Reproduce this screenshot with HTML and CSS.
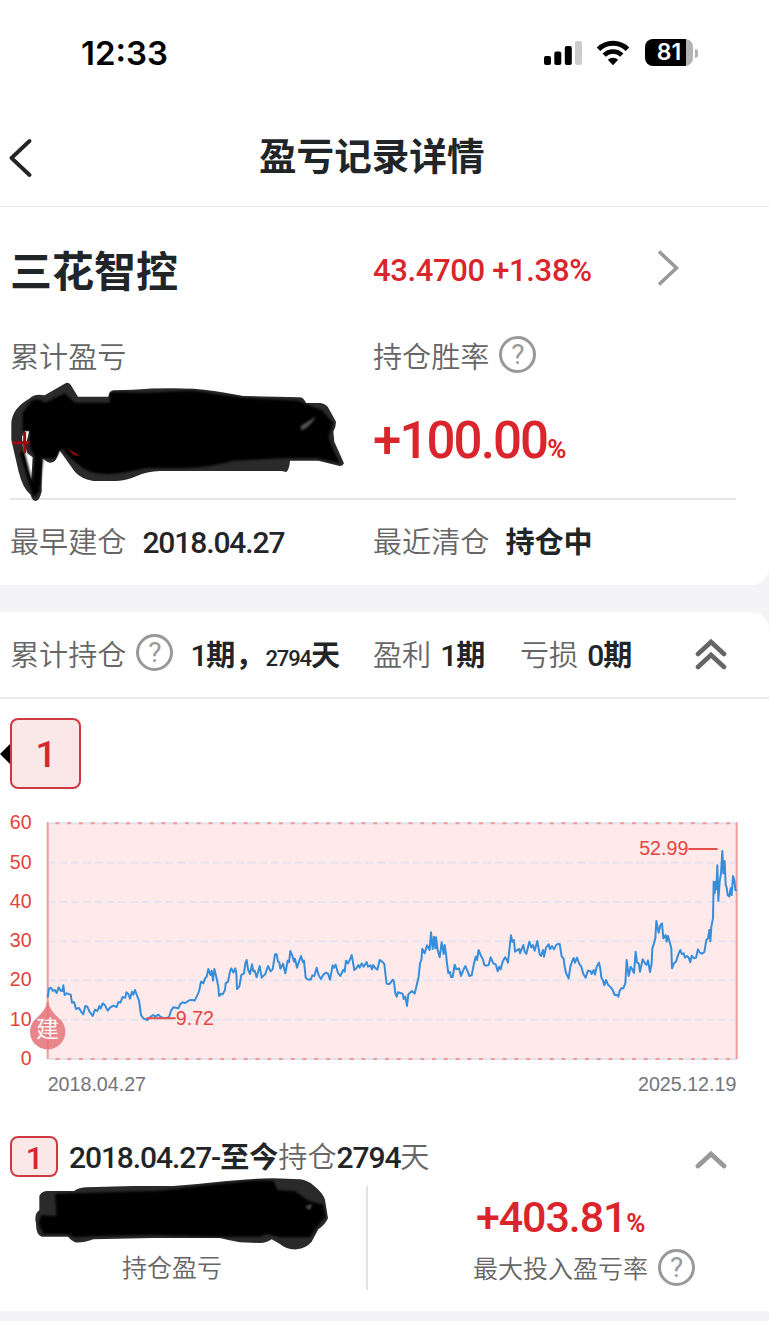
FILE: index.html
```html
<!DOCTYPE html>
<html lang="zh-CN">
    <head>
        <meta charset="utf-8">
        <meta name="viewport" content="width=device-width, initial-scale=1.0">
        <title>盈亏记录详情</title>
        <link rel="stylesheet" href="styles.css">
    </head>
    <body>
        <div class="statusbar">
            <span class="time">12:33</span>
            <svg class="signal" width="38" height="26" viewBox="0 0 38 26">
                <rect x="0" y="16" width="7" height="9" rx="2"/>
                <rect x="10.3" y="11.5" width="7" height="13.5" rx="2"/>
                <rect x="20.8" y="6" width="7" height="19" rx="2"/>
                <rect x="31" y="1" width="7" height="24" rx="2" fill="#ccc"/>
            </svg>
            <svg class="wifi" width="34" height="26" viewBox="0 0 34 26">
                <path d="M2.5 9.2A20.5 20.5 0 0 1 31.5 9.2" fill="none" stroke="#000" stroke-width="5"/>
                <path d="M8.2 15.2A12.4 12.4 0 0 1 25.8 15.2" fill="none" stroke="#000" stroke-width="4.6"/>
                <path d="M17 25.2L11.8 19.8A7.6 7.6 0 0 1 22.2 19.8Z"/>
            </svg>
            <div class="battery"><span>81</span></div>
            <div class="nub"></div>
        </div>
        <div class="navbar">
            <svg class="back" width="24" height="42" viewBox="0 0 24 42">
                <path d="M21.5 4L3.5 21L21.5 38" fill="none" stroke="#222528" stroke-width="3.8" stroke-linecap="round" stroke-linejoin="round"/>
            </svg>
            <h1>盈亏记录详情</h1>
        </div>

        <div class="card summary">
            <div class="row stock">
                <div class="left name">三花智控</div>
                <div class="num price">43.4700 +1.38%</div>
                <svg class="go" width="24" height="40" viewBox="0 0 24 40">
                    <path d="M2 3.5L19.5 20L2 36.5" fill="none" stroke="#999" stroke-width="3.6"/>
                </svg>
            </div>
            <div class="row labels">
                <div class="left">累计盈亏</div>
                <div>持仓胜率</div>
                <div class="help">?</div>
            </div>
            <div class="row values">
                <div class="left">
                    <!-- hidden amount -->
                    <svg class="scribble" width="363" height="117" viewBox="30 483 1089 351">
                        <path fill="#2a2a2a" d="M134 526L198 489Q208 486 213 496L234 530H325Q328 512 342 511L400 509Q480 503 580 506Q640 510 730 528L900 532Q912 534 918 549H960Q975 550 984 562L1008 605Q1008 620 1000 635L1003 665L1032 730Q1028 740 1016 737L955 722H870Q868 750 858 756L845 753H480Q440 755 410 768Q380 782 350 783H280Q245 778 225 756L178 690Q170 730 150 728Q134 724 126 710L125 815Q118 843 106 843Q96 842 92 824Q68 805 56 755L34 660V610Q36 565 90 535Q102 520 134 526ZM76 632L66 650Q72 740 94 780L98 712L82 700L76 680L88 632Z"/>
                        <path class="core" d="M92 545Q110 530 135 548L195 520L225 548H330V516L440 518L580 512L730 534L895 542L925 556L965 570L1000 610L985 650L1000 690L1020 730L950 714H860L700 722Q640 740 560 744H440L380 756Q320 768 270 755Q225 735 186 684L165 715H130L118 815L100 832L60 700L72 690L98 790L104 710L90 680V632H68V580Z"/>
                        <path d="M38 668H88M74 636V700" stroke="#a00812" stroke-width="9"/>
                        <path d="M205 690Q220 692 240 708L222 706Z" fill="#8a0610"/>
                        <path class="core" d="M902 618Q930 600 948 590Q930 620 904 632Z" fill="#555"/>
                    </svg>
                </div>
                <div class="num big">+100.00<small>%</small></div>
            </div>
            <div class="line"></div>
            <div class="row dates">
                <div class="left">最早建仓<span class="num dark date">2018.04.27</span></div>
                <div>最近清仓<b class="state">持仓中</b></div>
            </div>
        </div>

        <div class="card periods">
            <div class="row total">
                <div class="left hold">累计持仓<div class="help">?</div><b class="first"><i>1</i>期，</b><b><i class="days">2794</i>天</b></div>
                <div class="win">盈利<b><i>1</i>期</b></div>
                <div class="lose">亏损<b><i>0</i>期</b></div>
                <svg class="fold" width="32" height="34" viewBox="0 0 32 34">
                    <path d="M3 16L16 4L29 16M3 29L16 17L29 29" fill="none" stroke="#666" stroke-width="4.6" stroke-linecap="round" stroke-linejoin="miter"/>
                </svg>
            </div>
            <div class="tabs">
                <div class="arrow"></div>
                <div class="tab num">1</div>
            </div>
            <!-- 3 units = 1px -->
            <svg class="chart" width="769" height="300" viewBox="0 0 2307 900">
                <rect x="143" y="70" width="2067" height="707" fill="#feeaea"/>
                <path class="grid" d="M143 188H2210M143 306H2210M143 424H2210M143 541H2210M143 659H2210"/>
                <path class="edge" d="M143 70H2210M143 777H2210"/>
                <path class="dots" d="M143 70H2210M143 777H2210"/>
                <path class="side" d="M143 67V777M2210 67V777"/>
                <polyline class="price-line" points="143,593 147,566 153,563 158,572 165,570 170,579 176,562 182,572 187,573 190,556 194,585 200,580 212,584 216,608 222,606 228,627 237,624 244,636 250,643 256,618 262,620 268,634 278,648 285,629 292,633 298,618 302,626 308,610 315,616 323,632 331,622 340,617 350,621 355,606 361,608 368,591 376,593 379,577 385,582 390,596 396,575 400,584 405,570 411,587 417,602 423,645 430,655 442,660 452,650 460,645 466,650 475,644 482,651 495,655 507,652 513,632 520,622 535,625 541,612 548,607 556,609 563,604 570,600 578,600 584,602 590,590 597,575 603,545 610,550 615,535 620,530 625,507 631,525 635,512 639,542 643,507 650,535 655,560 657,588 662,582 668,583 675,570 677,550 684,545 690,515 694,505 700,518 706,505 709,520 711,567 718,560 724,525 732,520 736,490 740,480 744,508 750,522
                    756,493 760,514 764,512 770,532 779,498 785,533 796,522 804,498 812,514 818,508 825,463 830,463 834,485 838,487 841,506 849,491 856,520 863,482 867,487 871,453 878,470 882,485 885,476 891,503 897,485 903,468 909,487 912,482 917,533 922,538 932,539 937,526 943,528 950,503 956,526 963,537 970,524 978,518 984,521 990,539 998,496 1002,503 1007,494 1014,519 1021,528 1030,509 1034,515 1038,482 1044,490 1050,478 1055,465 1063,510 1069,505 1075,495 1079,503 1085,490 1091,500 1100,486 1104,500 1112,496 1116,508 1120,495 1125,503 1132,509 1139,480 1149,487 1153,492 1156,520 1160,551 1168,552 1179,539 1182,546 1186,580 1190,590 1194,577 1208,581 1211,597 1216,590 1221,618 1225,583 1236,573 1244,581 1249,560 1256,530 1260,490 1264,480 1267,446 1274,460 1281,436 1289,450 1293,397 1298,447 1302,410 1306,445 1308,412 1313,450 1319,472 1325,427 1331,462 1334,435 1338,462 1341,490 1345,519 1350,516 1353,531 1358,531 1364,494 1369,508 1377,505 1383,528 1391,508 1396,498 1403,514 1408,528 1415,526 1421,495 1427,470 1431,480 1436,450 1443,468 1448,476 1453,495 1460,497 1466,495 1472,472 1480,490 1487,493 1493,514 1498,500 1502,508
                    1508,485 1515,472 1520,478 1524,488 1528,450 1533,406 1537,425 1542,420 1545,455 1552,450 1558,447 1560,460 1570,435 1574,455 1579,462 1588,425 1594,442 1599,435 1604,452 1612,423 1619,463 1623,468 1629,450 1632,470 1638,443 1646,433 1650,448 1656,438 1662,448 1668,436 1673,432 1679,432 1685,469 1691,476 1694,500 1698,519 1706,535 1711,500 1718,480 1721,474 1725,488 1731,473 1738,492 1744,500 1750,522 1757,533 1764,512 1771,513 1775,522 1781,510 1785,524 1790,500 1797,488 1801,507 1804,532 1809,542 1813,556 1818,540 1824,554 1830,560 1837,568 1844,585 1850,584 1855,590 1859,573 1864,565 1870,565 1876,550 1880,480 1886,528 1892,500 1897,508 1902,519 1907,455 1911,487 1916,490 1920,515 1928,478 1933,487 1939,495 1944,481 1950,516 1955,490 1957,445 1962,430 1966,415 1969,363 1976,398 1981,376 1986,370 1990,415 1997,405 2000,425 2004,408 2010,430 2014,445 2016,505 2022,490 2028,485 2035,463 2041,450 2045,462 2051,460 2055,473 2061,468 2066,473 2071,487 2075,467 2082,475 2088,473 2094,448 2099,458 2106,461 2113,456 2119,420 2124,415 2128,390 2131,424 2134,380 2139,355 2141,245 2144,280 2147,245 2149,268 2152,196 2155,303 2159,245 2163,220 2167,153 2170,220 2174,183 2177,255 2180,262 2183,285 2188,290 2192,265 2195,285 2199,228 2203,240 2206,270 2210,272"/>
                <path class="mark" d="M439 655H527M2065 147H2153"/>
                <path d="M143 606Q151 632 176 654A53 53 0 1 1 110 654Q135 632 143 606Z" fill="#e9868c"/>
                <path d="M143 606V746" stroke="#f17478"/>
                <text class="buy" x="143" y="711">建</text>
                <g class="axis">
                    <text x="95" y="88">60</text>
                    <text x="95" y="206">50</text>
                    <text x="95" y="323">40</text>
                    <text x="95" y="441">30</text>
                    <text x="95" y="559">20</text>
                    <text x="95" y="677">10</text>
                    <text x="95" y="794">0</text>
                    <text x="642" y="676">9.72</text>
                    <text x="2065" y="166">52.99</text>
                </g>
                <g class="xaxis">
                    <text x="143" y="873">2018.04.27</text>
                    <text x="1914" y="873">2025.12.19</text>
                </g>
            </svg>
            <div class="row period">
                <div class="badge num">1</div>
                <div class="range"><span class="num dark">2018.04.27-</span><b>至今</b>持仓<span class="num dark">2794</span>天</div>
                <svg class="up" width="32" height="22" viewBox="0 0 32 22">
                    <path d="M3 17L16 5L29 17" fill="none" stroke="#999" stroke-width="4.8" stroke-linecap="round"/>
                </svg>
            </div>
            <div class="detail">
                <div class="col profit">
                    <!-- hidden amount -->
                    <svg class="scribble" width="356" height="63" viewBox="30 225 1068 189">
                        <path fill="#2a2a2a" d="M118 258Q124 244 140 243H222Q238 232 260 232L400 228H520Q600 222 680 213Q760 205 820 205L900 208Q925 212 940 226Q970 250 975 270L984 325Q975 345 955 358L935 395Q918 415 890 418Q860 420 840 402L815 388Q800 399 780 399L720 397Q690 392 660 384H460L280 388Q245 400 225 397Q212 390 204 380H125Q108 376 108 340Q103 320 110 308L118 300Z"/>
                        <path class="core" d="M165 252L225 250L480 242L610 227L760 212H820L832 240L885 244L925 272L970 284L976 320L950 352L930 382H840L800 372L780 380L660 380L460 375L300 378L225 382L200 372H130L116 340L124 316L170 318Z"/>
                        <path class="core" d="M915 290L936 282L930 300Z" fill="#555"/>
                    </svg>
                    <div class="cap">持仓盈亏</div>
                </div>
                <div class="vline"></div>
                <div class="col rate">
                    <div class="num mid">+403.81<small>%</small></div>
                    <div class="cap">最大投入盈亏率<div class="help">?</div></div>
                </div>
            </div>
        </div>
    </body>
</html>
```

FILE: styles.css
```css
body{
    margin: 0px;
    height: 1321px;
    overflow: hidden;
    background-color: #f4f4f7;
    color: #666;
    font-family: Roboto, "Noto Sans CJK SC", sans-serif;
    font-size: 29.1px;
    font-weight: 350;
    white-space: nowrap;
}
.statusbar{
    display: flex;
    align-items: center;
    height: 104px;
    box-sizing: border-box;
    padding: 2px 71px 0px 81px;
    background-color: #fff;
    color: #000;
    font-family: Inter, sans-serif;
    font-weight: 600;
}
.time{
    flex: 1;
    font-size: 33px;
}
.wifi{
    margin: 0px 15px 0px 14px;
}
.battery{
    width: 48px;
    height: 27px;
    margin-top: -2px;
    border-radius: 8px;
    background: linear-gradient(to right, #000 41px, #b3b3b3 41px);
    color: #fff;
    font-size: 23px;
    line-height: 27px;
    text-align: center;
}
.nub{
    width: 3px;
    height: 9px;
    margin-left: 2px;
    border-radius: 0px 4px 4px 0px;
    background-color: #b3b3b3;
}
.navbar{
    display: flex;
    align-items: center;
    height: 98px;
    padding: 4px 0px 0px 8px;
    border-bottom: 1px solid #e8e8e8;
    background-color: #fff;
}
h1{
    margin: 0px 0px 0px 227px;
    color: #222528;
    font-size: 37.6px;
    font-weight: 700;
    line-height: 60px;
}
.back{
    margin-top: 2px;
}
.card{
    background-color: #fff;
}
.summary{
    height: 378px;
    border-radius: 0px 0px 18px 0px;
}
.periods{
    height: 699px;
    margin-top: 27px;
    border-radius: 0px 18px 0px 0px;
}
.row{
    display: flex;
    align-items: center;
    box-sizing: border-box;
    padding-left: 10px;
}
.left{
    width: 363px;
}
.num, i{
    font-family: Roboto, sans-serif;
    font-style: normal;
    font-weight: 500;
    letter-spacing: -1.1px;
}
.dark{
    color: #222528;
    font-size: 30px;
}
b{
    color: #222528;
    font-weight: 700;
}
.help{
    display: inline-block;
    box-sizing: border-box;
    width: 37px;
    height: 37px;
    margin-left: 10px;
    border: 3px solid #999;
    border-radius: 50%;
    color: #999;
    font-size: 28px;
    font-weight: 400;
    line-height: 32px;
    text-align: center;
}
.stock{
    height: 125px;
    padding-bottom: 3px;
}
.name{
    color: #222528;
    font-size: 42px;
    font-weight: 700;
}
.price{
    width: 284px;
    padding-top: 4px;
    color: #d9252b;
    font-size: 31px;
    letter-spacing: -0.35px;
}
.labels{
    height: 49px;
    padding-bottom: 4px;
}
.values{
    height: 117px;
}
.scribble{
    display: block;
    overflow: visible;
    filter: blur(0.6px);
}
.core{
    filter: blur(3px);
}
.big{
    padding-top: 2px;
    color: #d9252b;
    font-size: 51px;
    letter-spacing: -1.9px;
}
small{
    font-size: 26px;
    font-weight: 700;
}
.line{
    width: 726px;
    height: 2px;
    margin-left: 10px;
    background-color: #e6e6e6;
}
.dates{
    height: 85px;
    padding-bottom: 5px;
}
.date, .state{
    margin-left: 16px;
}
.total{
    height: 87px;
    padding-bottom: 4px;
    border-bottom: 2px solid #e8e8e8;
}
.hold{
    display: flex;
    align-items: center;
}
.total i{
    font-size: 30px;
}
.total .days{
    font-size: 22px;
}
.first{
    width: 75px;
    margin-left: 17px;
}
.win{
    width: 147px;
}
.win b, .lose b{
    margin-left: 9px;
}
.lose{
    width: 175px;
}
.fold{
    margin-top: 4px;
}
.tabs{
    display: flex;
    align-items: center;
    height: 71px;
    padding: 19px 0px 11px;
}
.arrow{
    border: 10px solid transparent;
    border-left: none;
    border-right-color: #000;
}
.tab{
    box-sizing: border-box;
    width: 71px;
    height: 71px;
    border: 2px solid #cf3a42;
    border-radius: 8px;
    background-color: #fae8e8;
    color: #d9252b;
    font-size: 37px;
    line-height: 69px;
    text-align: center;
}
.chart{
    display: block;
}
.chart path{
    stroke-width: 6;
}
.chart text{
    font-family: "Liberation Sans", sans-serif;
    font-size: 59px;
    font-weight: 400;
}
.grid{
    stroke: #e6e3f0;
    stroke-dasharray: 23.5 11.8;
}
.edge{
    stroke: #e3e3ee;
}
.dots{
    stroke: #f09a98;
    stroke-dasharray: 11.8 23.5;
    stroke-dashoffset: -23.5;
}
.side{
    stroke: #f39a9b;
}
.mark{
    stroke: #e4504a;
}
.price-line{
    fill: none;
    stroke: #368edb;
    stroke-width: 6;
    stroke-linejoin: round;
}
.axis text{
    fill: #e5433e;
    text-anchor: end;
}
.xaxis text{
    fill: #74747c;
}
.chart .buy{
    fill: #fff;
    font-family: "Noto Sans CJK SC", sans-serif;
    font-size: 68px;
    text-anchor: middle;
}
.period{
    height: 85px;
    padding-top: 24px;
}
.badge{
    box-sizing: border-box;
    width: 48px;
    height: 41px;
    margin-top: 3px;
    border: 2px solid #cf3a42;
    border-radius: 8px;
    background-color: #fae8e8;
    color: #d9252b;
    font-size: 31px;
    line-height: 41px;
    text-align: center;
}
.range{
    width: 626px;
    margin-left: 11px;
}
.up{
    margin-top: 11px;
}
.detail{
    display: flex;
    height: 126px;
}
.col{
    display: flex;
    flex-direction: column;
}
.profit{
    width: 356px;
    padding-left: 10px;
}
.cap{
    display: flex;
    align-items: center;
    height: 36px;
    font-size: 25px;
}
.profit .cap{
    margin: 0px 0px 0px 112px;
}
.vline{
    width: 2px;
    height: 104px;
    margin-top: 1px;
    background-color: #e3e3e3;
}
.rate{
    margin-left: 105px;
}
.mid{
    height: 64px;
    margin-left: 3px;
    color: #d9252b;
    font-size: 43px;
    line-height: 64px;
}
```
